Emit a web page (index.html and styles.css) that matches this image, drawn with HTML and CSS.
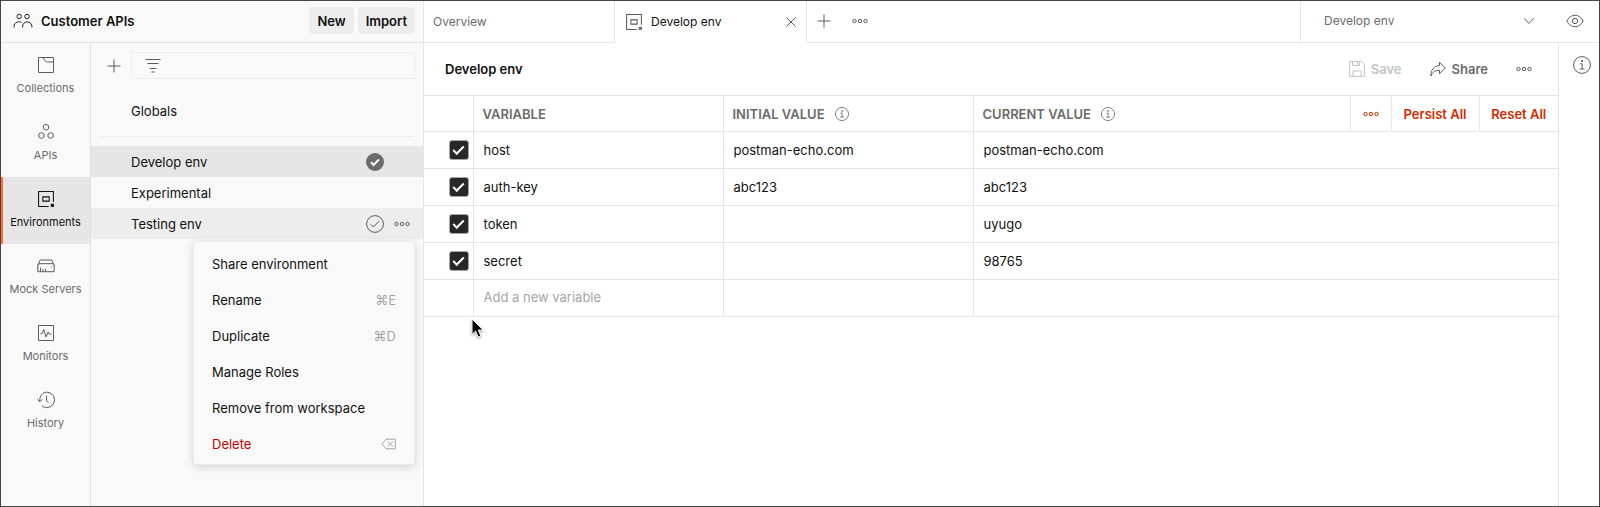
FILE: index.html
```html
<!DOCTYPE html>
<html lang="en">
<head>
<meta charset="utf-8">
<title>Customer APIs</title>
<link rel="stylesheet" href="styles.css">
</head>
<body>
<svg width="0" height="0" class="sprite" aria-hidden="true">
  <symbol id="dots" viewBox="0 0 16 6"><circle cx="2.5" cy="3" r="1.7"/><circle cx="8" cy="3" r="1.7"/><circle cx="13.5" cy="3" r="1.7"/></symbol>
  <symbol id="plus" viewBox="0 0 14 14"><path d="M7 .5v13M.5 7h13"/></symbol>
  <symbol id="info" viewBox="0 0 18 18"><circle cx="9" cy="9" r="8.4"/><path d="M7 7.8h2.2V13M6.7 13h4.8M8.5 4.6h1.3v.9H8.5z"/></symbol>
  <symbol id="env" viewBox="0 0 17 17"><path d="M15.5 11V1.5h-14v14H11M5.500 6.500h6v4h-6z"/><path class="solid" d="M13 13h3v3h-3z"/></symbol>
</svg>
<div class="app">
  <aside class="sidebar">
    <header class="workspace">
      <svg class="people" width="20" height="16" viewBox="0 0 20 16"><circle cx="6.200" cy="3.500" r="2.200"/><circle cx="14" cy="3.500" r="2.200"/><path d="M1 14.500c0-3 1-5 3.500-5.500 1.500-.4 3-.2 4 .6M9.500 14.500c0-3.700 1.800-5.600 4.700-5.600s4.800 1.900 4.800 5.600"/></svg>
      <h1 class="workspace-name">Customer APIs</h1>
      <button class="btn">New</button>
      <button class="btn">Import</button>
    </header>
    <div class="sidebar-body">
      <nav class="rail">
        <button class="rail-item"><svg width="18" height="18" viewBox="0 0 18 18"><path d="M1.500 1.500h15v15h-15zM6 1.500l1.500 2.500c.6 1 1.500 2 3 2h6"/></svg>Collections</button>
        <button class="rail-item"><svg width="18" height="18" viewBox="0 0 18 18"><path d="M9 1.200l2.600 1.500v3L9 7.200 6.400 5.700v-3zM4.400 9.500L7 11v3l-2.600 1.500L1.800 14v-3zM13.600 9.500l2.600 1.500v3l-2.600 1.500L11 14v-3z"/></svg>APIs</button>
        <button class="rail-item active"><svg width="18" height="18"><use href="#env"/></svg>Environments</button>
        <button class="rail-item"><svg width="18" height="18" viewBox="0 0 18 18"><path d="M.8 8.500v6.200h16.400V8.500L14.800 3H3.200zM.8 8.500c.4-1.600.9-1.800 2-1.800h12.400c1.100 0 1.600.3 2 1.800M3.500 14.500v-4M6 14.500v-2.500M8.500 14.500v-2.500M13.800 10h1"/></svg>Mock Servers</button>
        <button class="rail-item"><svg width="18" height="18" viewBox="0 0 18 18"><path d="M1.500 1.500h15v15h-15zM3.500 9.500h1.700l1.600-4 2.200 7.500 2.200-5 1 2h2.300"/></svg>Monitors</button>
        <button class="rail-item"><svg width="18" height="18" viewBox="0 0 18 18"><path d="M2.800 10.500C2.300 5 5.600 1.200 9.800 1.200a7.600 7.600 0 0 1 0 15.400c-2 0-3.800-.8-5-2M.4 8.200l2.400 2.600 2.600-2.600M9.500 5v5l2 1.500"/></svg>History</button>
      </nav>
      <section class="panel">
        <div class="panel-tools">
          <button class="icon-btn" aria-label="Create environment"><svg width="14" height="14"><use href="#plus"/></svg></button>
          <label class="filter">
            <svg width="16" height="16" viewBox="0 0 16 16"><path d="M.5 1.500h15M2.500 5.500h11M4.800 10.500h6.600M6.400 14h3.200"/></svg>
            <input type="text" aria-label="Filter environments">
          </label>
        </div>
        <a class="globals" href="#">Globals</a>
        <ul class="env-list">
          <li class="env selected"><a href="#">Develop env</a>
            <svg class="tick" width="18" height="18" viewBox="0 0 18 18"><circle cx="9" cy="9" r="9" fill="#6b6b6b" stroke="none"/><path d="M5 9.300l2.700 2.700L13 6.400" stroke="#fff" stroke-width="2"/></svg>
            <span class="env-more"></span></li>
          <li class="env"><a href="#">Experimental</a></li>
          <li class="env hovered"><a href="#">Testing env</a>
            <svg class="tick" width="18" height="18" viewBox="0 0 18 18"><circle cx="9" cy="9" r="8.400"/><path d="M4.800 9.300l2.700 2.700 5.500-5.800"/></svg>
            <button class="icon-btn env-more" aria-label="More actions"><svg width="16" height="6"><use href="#dots"/></svg></button>
            <div class="menu">
              <button class="menu-item">Share environment</button>
              <button class="menu-item">Rename<kbd>⌘E</kbd></button>
              <button class="menu-item">Duplicate<kbd>⌘D</kbd></button>
              <button class="menu-item">Manage Roles</button>
              <button class="menu-item">Remove from workspace</button>
              <button class="menu-item danger">Delete<svg width="15" height="12" viewBox="0 0 15 12"><path d="M5 1.200h9.300v9.600H5L.9 6zM7 3.500l5 5M12 3.500l-5 5"/></svg></button>
            </div>
          </li>
        </ul>
      </section>
    </div>
  </aside>
  <main class="main">
    <div class="tabbar">
      <button class="tab">Overview</button>
      <div class="tab current"><svg width="18" height="18"><use href="#env"/></svg><span>Develop env</span><button class="icon-btn" aria-label="Close tab"><svg width="12" height="12" viewBox="0 0 12 12"><path d="M1.500 1.500l9 9M10.500 1.500l-9 9"/></svg></button></div>
      <div class="tab-tools">
        <button class="icon-btn" aria-label="New tab"><svg width="14" height="14"><use href="#plus"/></svg></button>
        <button class="icon-btn" aria-label="Tab options"><svg width="16" height="6"><use href="#dots"/></svg></button>
      </div>
      <div class="env-picker">
        <select aria-label="Active environment"><option>Develop env</option></select>
        <svg width="12" height="8" viewBox="0 0 12 8"><path d="M1.200 1.300L6 6.500l4.800-5.200"/></svg>
        <button class="icon-btn" aria-label="Environment quick look"><svg width="18" height="14" viewBox="0 0 18 14"><path d="M.7 7C3 3.200 5.800 1.200 9 1.200S15 3.200 17.300 7C15 10.800 12.200 12.800 9 12.800S3 10.800.7 7z"/><circle cx="9" cy="7" r="2.700"/></svg></button>
      </div>
    </div>
    <div class="work">
      <section class="editor">
        <header class="editor-head">
          <h2>Develop env</h2>
          <button class="action" disabled><svg width="16" height="16" viewBox="0 0 16 16"><path d="M.6.600h12.200l2.600 2.600v12.200H.6zM3.500.600v3.800h7V.600M8.500.600v3.800M4 15.400V10h8v5.400"/></svg>Save</button>
          <button class="action"><svg width="16" height="16" viewBox="0 0 16 16"><path d="M9.500 1.300L15.300 7l-5.800 5.600V9.400C5 9.200 3 11 .8 15 .9 9 4 5 9.500 4.600z"/></svg>Share</button>
          <button class="icon-btn" aria-label="More actions"><svg width="16" height="6"><use href="#dots"/></svg></button>
        </header>
        <table class="vars">
          <colgroup><col class="c-check"><col class="c-name"><col class="c-name"><col><col class="c-more"><col class="c-persist"><col class="c-reset"></colgroup>
          <thead>
            <tr>
              <th></th>
              <th>VARIABLE</th>
              <th><span class="th-info">INITIAL VALUE<svg width="14" height="14"><use href="#info"/></svg></span></th>
              <th><span class="th-info">CURRENT VALUE<svg width="14" height="14"><use href="#info"/></svg></span></th>
              <th class="tool"><button aria-label="Column options"><svg width="16" height="6"><use href="#dots"/></svg></button></th>
              <th class="tool"><button>Persist All</button></th>
              <th class="tool"><button>Reset All</button></th>
            </tr>
          </thead>
          <tbody>
            <tr><td class="check"><input type="checkbox" checked aria-label="host"></td><td>host</td><td>postman-echo.com</td><td colspan="4">postman-echo.com</td></tr>
            <tr><td class="check"><input type="checkbox" checked aria-label="auth-key"></td><td>auth-key</td><td>abc123</td><td colspan="4">abc123</td></tr>
            <tr><td class="check"><input type="checkbox" checked aria-label="token"></td><td>token</td><td></td><td colspan="4">uyugo</td></tr>
            <tr><td class="check"><input type="checkbox" checked aria-label="secret"></td><td>secret</td><td></td><td colspan="4">98765</td></tr>
            <tr class="new-row"><td></td><td><input class="new-var" type="text" placeholder="Add a new variable" aria-label="Add a new variable"></td><td></td><td colspan="4"></td></tr>
          </tbody>
        </table>
      </section>
      <aside class="context-bar"><button class="icon-btn" aria-label="Environment details"><svg width="18" height="18"><use href="#info"/></svg></button></aside>
    </div>
  </main>
  <svg class="pointer" width="16" height="22" viewBox="0 0 16 22"><path d="M1 1v15.500l3.600-3.400 2.600 6 2.700-1.200-2.600-5.800h5z"/></svg>
</div>
</body>
</html>
```
FILE: styles.css
```css
* { box-sizing: border-box; }

body {
  margin: 0;
  font: 13px/20px Inter, "Liberation Sans", sans-serif;
  color: #111;
}

button, input, select {
  font: inherit;
  color: inherit;
  margin: 0;
  padding: 0;
  border: 0;
  background: none;
}

h1, h2 { margin: 0; font-size: 13px; font-weight: 600; }

a { color: inherit; text-decoration: none; }

svg {
  display: block;
  flex: none;
  fill: none;
  stroke: #5c5c5c;
  stroke-width: 1;
}

.sprite { position: absolute; }
.solid { fill: currentColor; stroke: none; }

.app {
  position: relative;
  display: flex;
  min-height: 100vh;
  border: 1px solid #444;
  background: #fff;
}

.icon-btn { display: grid; place-items: center; color: #6b6b6b; }

/* Sidebar */
.sidebar {
  flex: none;
  display: flex;
  flex-direction: column;
  width: 423px;
  background: #f9f9f9;
  border-right: 1px solid #e6e6e6;
}

.workspace {
  display: flex;
  align-items: center;
  gap: 4px;
  height: 42px;
  padding: 0 8px 2px 12px;
  border-bottom: 1px solid #e1e1e1;
}

.people { stroke: #212121; }
.workspace-name { flex: 1; padding-left: 4px; }

.btn {
  height: 27px;
  padding: 0 8px;
  border-radius: 4px;
  background: #ededed;
  font-weight: 600;
}

.sidebar-body { flex: 1; display: flex; }

.rail {
  width: 90px;
  border-right: 1px solid #e1e1e1;
}

.rail-item {
  display: flex;
  flex-direction: column;
  align-items: center;
  gap: 6px;
  width: 100%;
  height: 67px;
  padding-top: 13px;
  font-size: 11px;
  line-height: 16px;
  color: #6b6b6b;
}

.rail-item.active {
  box-shadow: inset 2px 0 #ff6c37;
  background: #e6e6e6;
  color: #111;
}

.rail-item.active svg { stroke: #111; }

.panel { flex: 1; padding-top: 9px; }

.panel-tools {
  display: flex;
  gap: 10px;
  padding: 0 8px 0 16px;
}

.filter {
  flex: 1;
  display: flex;
  align-items: center;
  gap: 8px;
  height: 27px;
  padding: 0 13px;
  border: 1px solid #ededed;
}

.filter input { flex: 1; min-width: 0; }

.globals {
  display: block;
  margin: 0 8px 9px 9px;
  padding: 22px 0 15px 31px;
  border-bottom: 1px solid #ededed;
}

.env-list { margin: 0; padding: 0; list-style: none; }

.env {
  position: relative;
  display: flex;
  align-items: center;
  gap: 8px;
  height: 31px;
  padding: 0 11px 0 40px;
}

.env > a { flex: 1; }
.env.selected { background: #e6e6e6; }
.env.hovered { background: #ededed; }
.env-more { width: 20px; }

.menu {
  position: absolute;
  top: 100%;
  right: 8px;
  width: 222px;
  margin-top: 2px;
  padding: 4px 0 2px;
  border: 1px solid #ededed;
  border-radius: 4px;
  background: #f9f9f9;
  box-shadow: 0 2px 8px rgba(0, 0, 0, .15);
}

.menu-item {
  display: flex;
  align-items: center;
  justify-content: space-between;
  width: 100%;
  height: 36px;
  padding: 0 18px;
}

.menu-item kbd { font: inherit; color: #a6a6a6; }
.menu-item svg { stroke: #a6a6a6; }
.menu-item.danger { color: #c80000; }

/* Tabs */
.main { flex: 1; min-width: 0; display: flex; flex-direction: column; }

.tabbar {
  display: flex;
  height: 42px;
  font-size: 12px;
}

.tab {
  display: flex;
  align-items: center;
  gap: 8px;
  width: 191px;
  padding: 0 9px;
  border-right: 1px solid #e6e6e6;
  border-bottom: 1px solid #e6e6e6;
  color: #6b6b6b;
}

.tab.current {
  width: 192px;
  padding-left: 10px;
  border-bottom-color: transparent;
  color: #111;
}

.tab.current svg { color: #6b6b6b; }
.tab.current span { flex: 1; }

.tab-tools {
  flex: 1;
  display: flex;
  align-items: center;
  gap: 21px;
  padding: 0 10px 2px;
  border-bottom: 1px solid #e6e6e6;
}

.env-picker {
  display: flex;
  align-items: center;
  width: 299px;
  padding: 0 15px 2px 23px;
  border-left: 1px solid #e6e6e6;
  border-bottom: 1px solid #e6e6e6;
  color: #6b6b6b;
}

.env-picker select {
  flex: 1;
  appearance: none;
  margin-right: -12px;
}

.env-picker > svg { pointer-events: none; margin-right: 31px; }

/* Editor */
.work { flex: 1; display: flex; }
.editor { flex: 1; min-width: 0; }

.editor-head {
  display: flex;
  align-items: center;
  gap: 28px;
  height: 52px;
  padding: 0 26px 0 21px;
}

.editor-head h2 { flex: 1; }

.action {
  display: flex;
  align-items: center;
  gap: 6px;
  font-weight: 600;
  color: #6b6b6b;
}

.action:disabled { color: #c4c4c4; }
.action:disabled svg { stroke: #c4c4c4; }

.context-bar {
  width: 41px;
  padding: 13px 0 0 5px;
  border-left: 1px solid #e6e6e6;
}

.context-bar .icon-btn { width: 100%; }

.vars {
  width: 100%;
  table-layout: fixed;
  border-collapse: collapse;
}

.c-check { width: 49px; }
.c-name { width: 250px; }
.c-more { width: 41px; }
.c-persist { width: 88px; }
.c-reset { width: 79px; }

.vars th, .vars td {
  height: 37px;
  padding: 0 10px;
  border: 1px solid #e6e6e6;
  text-align: left;
  font-weight: 400;
}

.vars th:first-child, .vars td:first-child { border-left: 0; }
.vars th:last-child, .vars td:last-child { border-right: 0; }

.vars th { height: 36px; padding: 0 9px; font-weight: 600; color: #6b6b6b; }
.th-info { display: flex; align-items: center; gap: 10px; }

.vars .tool { padding: 0; }

.tool button {
  display: grid;
  place-items: center;
  width: 100%;
  font-weight: 600;
  color: #d22b00;
}

.tool svg { stroke: #d22b00; }

.vars .new-row td { padding-bottom: 2px; }

.vars .check { padding: 0 4px 0 0; }

.check input {
  display: grid;
  place-items: center;
  appearance: none;
  width: 20px;
  height: 20px;
  margin-left: auto;
  border: 1px solid #a6a6a6;
  border-radius: 3px;
  background: #282828;
}

.check input:checked::after {
  content: "";
  width: 9px;
  height: 4px;
  margin-bottom: 3px;
  border: solid #fff;
  border-width: 0 0 2px 2px;
  transform: rotate(-45deg);
}

.new-var { display: block; width: 100%; }
.new-var::placeholder { color: #a6a6a6; opacity: 1; }

.pointer {
  position: absolute;
  left: 470px;
  top: 317px;
  fill: #000;
  stroke: #fff;
  filter: drop-shadow(0 1px 1px rgba(0, 0, 0, .4));
}
```
